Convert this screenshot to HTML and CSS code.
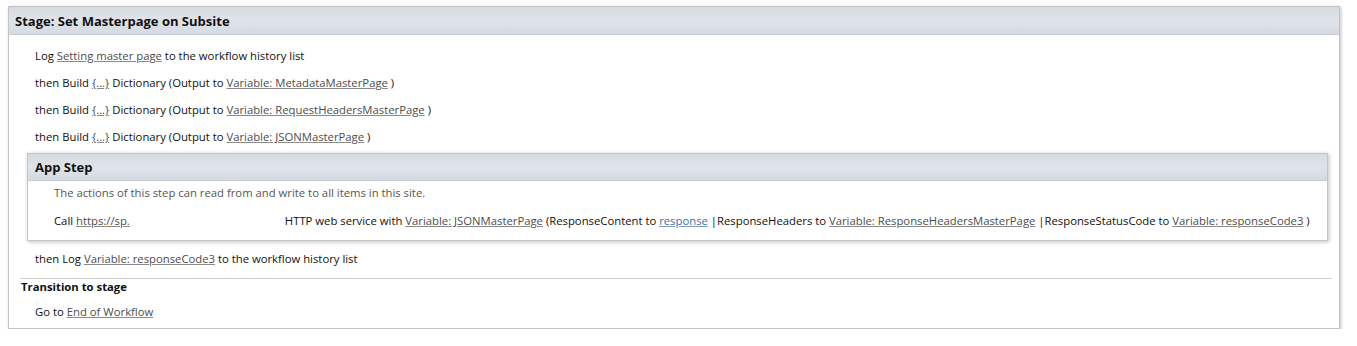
FILE: index.html
```html
<!DOCTYPE html>
<html lang="en">
<head>
  <meta charset="UTF-8">
  <title>Stage: Set Masterpage on Subsite</title>
  <link rel="stylesheet" href="styles.css">
</head>
<body>
  <div class="stage">
    <div class="stage-head">Stage: Set Masterpage on Subsite</div>

    <div class="stage-body">
      <div class="action">Log <a class="token">Setting master page</a> to the workflow history list</div>
      <div class="action">then Build <a class="token">{...}</a> Dictionary (Output to <a class="token">Variable: MetadataMasterPage</a> )</div>
      <div class="action">then Build <a class="token">{...}</a> Dictionary (Output to <a class="token">Variable: RequestHeadersMasterPage</a> )</div>
      <div class="action">then Build <a class="token">{...}</a> Dictionary (Output to <a class="token">Variable: JSONMasterPage</a> )</div>

      <!-- app step block -->
      <div class="step">
        <div class="step-head">App Step</div>
        <div class="step-desc">The actions of this step can read from and write to all items in this site.</div>
        <div class="step-action">Call <a class="token">https://sp.</a><span class="redacted"></span>HTTP web service with <a class="token">Variable: JSONMasterPage</a> (ResponseContent to <a class="token token-blue">response</a> |ResponseHeaders to <a class="token">Variable: ResponseHeadersMasterPage</a> |ResponseStatusCode to <a class="token">Variable: responseCode3</a> )</div>
      </div>

      <div class="action action-after">then Log <a class="token">Variable: responseCode3</a> to the workflow history list</div>
    </div>

    <div class="transition">
      <div class="transition-title">Transition to stage</div>
      <div class="action">Go to <a class="token">End of Workflow</a></div>
    </div>
  </div>
</body>
</html>
```

FILE: styles.css
```css
body {
  margin: 0;
  padding: 6px 0 0 8px;
  font-family: "Open Sans", "Noto Sans", sans-serif;
  font-size: 11.3px;
  color: #111;
  background: #fff;
}

.stage {
  width: 1330px;
  border: 1px solid #c4c4c4;
  box-shadow: 1px 1px 3px rgba(0, 0, 0, 0.25);
  padding-bottom: 3px;
}

.stage-head {
  height: 28px;
  line-height: 28px;
  padding-left: 6px;
  font-size: 13px;
  font-weight: bold;
  color: #111;
  background: linear-gradient(#d6dbe2, #e0e4ea 50%, #d5dae2);
  border-bottom: 1px solid #c9ced6;
  box-sizing: border-box;
}

.stage-body {
  padding-top: 7px;
}

.action {
  height: 27px;
  line-height: 27px;
  padding-left: 26px;
  white-space: nowrap;
}

.token {
  color: #4d4d4d;
  text-decoration: underline;
  text-decoration-color: #8a8a8a;
}

.token-blue {
  color: #3f6fa8;
  text-decoration-color: #7d9cc4;
}

.step {
  margin: 3px 11px 0 18px;
  border: 1px solid #c4c4c4;
  box-shadow: 1px 1px 4px rgba(0, 0, 0, 0.25);
  padding-bottom: 7px;
}

.step-head {
  height: 27px;
  line-height: 27px;
  padding-left: 7px;
  font-size: 13px;
  font-weight: bold;
  color: #111;
  background: linear-gradient(#d6dbe2, #e0e4ea 50%, #d5dae2);
  border-bottom: 1px solid #c9ced6;
  box-sizing: border-box;
}

.step-desc {
  height: 24px;
  line-height: 24px;
  padding-left: 26px;
  color: #555;
}

.step-action {
  margin-top: 4px;
  height: 24px;
  line-height: 24px;
  padding-left: 26px;
  white-space: nowrap;
}

.redacted {
  display: inline-block;
  width: 155px;
}

.action-after {
  margin-top: 4px;
}

.transition {
  margin: 6px 7px 0 11px;
  border-top: 1px solid #cfcfcf;
}

.transition-title {
  height: 16px;
  line-height: 16px;
  padding-left: 1px;
  font-weight: bold;
  color: #111;
}

.transition .action {
  margin-top: 3px;
  padding-left: 15px;
}
```
